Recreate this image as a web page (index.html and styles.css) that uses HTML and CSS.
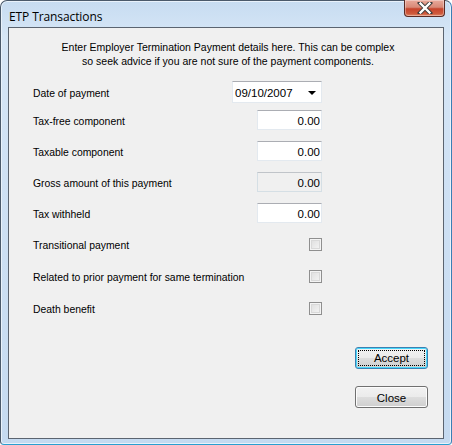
FILE: index.html
```html
<!DOCTYPE html>
<html lang="en">
<head>
    <meta charset="UTF-8">
    <title>ETP Transactions</title>
    <link rel="stylesheet" href="styles.css">
</head>
<body>
    <div class="window">
        <!-- Title bar -->
        <div class="title-bar">
            <span class="title">ETP Transactions</span>
            <div class="close-x">
                <svg width="18" height="12" viewBox="0 0 18 12">
                    <path d="M4 1 L14 11 M14 1 L4 11" stroke="#3a3a3a" stroke-width="4.2" stroke-linecap="square"/>
                    <path d="M4.5 1.5 L13.5 10.5 M13.5 1.5 L4.5 10.5" stroke="#ffffff" stroke-width="2.4" stroke-linecap="square"/>
                </svg>
            </div>
        </div>

        <!-- Client area -->
        <div class="client">
            <p class="intro">Enter Employer Termination Payment details here. This can be complex<br>so seek advice if you are not sure of the payment components.</p>

            <div class="form">
                <div class="row row-date">
                    <label>Date of payment</label>
                    <div class="date-box">
                        <span>09/10/2007</span>
                        <span class="arrow"></span>
                    </div>
                </div>
                <div class="row">
                    <label>Tax-free component</label>
                    <input class="num" type="text" value="0.00">
                </div>
                <div class="row">
                    <label>Taxable component</label>
                    <input class="num" type="text" value="0.00">
                </div>
                <div class="row">
                    <label>Gross amount of this payment</label>
                    <input class="num" type="text" value="0.00" disabled>
                </div>
                <div class="row">
                    <label>Tax withheld</label>
                    <input class="num" type="text" value="0.00">
                </div>
                <div class="row row-check">
                    <label>Transitional payment</label>
                    <span class="check"></span>
                </div>
                <div class="row row-check">
                    <label>Related to prior payment for same termination</label>
                    <span class="check"></span>
                </div>
                <div class="row row-check">
                    <label>Death benefit</label>
                    <span class="check"></span>
                </div>
            </div>

            <div class="buttons">
                <button class="btn btn-default"><span>Accept</span></button>
                <button class="btn">Close</button>
            </div>
        </div>
    </div>
</body>
</html>
```

FILE: styles.css
```css
/* Reset */
* {
    margin: 0;
    padding: 0;
    box-sizing: border-box;
}

body {
    width: 452px;
    height: 445px;
    overflow: hidden;
    background-color: #ffffff;
    font-family: 'Liberation Sans', Arial, sans-serif;
    font-size: 11px;
    color: #000;
}

/* Window frame */
.window {
    width: 452px;
    height: 445px;
    display: flex;
    flex-direction: column;
    border: 1px solid #4b5a6b;
    border-radius: 7px 7px 4px 4px;
    background: linear-gradient(180deg, #c7dcf1 0%, #d6e6f6 8%, #cfe1f4 40%, #c5daf0 100%);
    box-shadow: inset 0 0 0 1px #e9f2fb;
    padding: 0 7px 5px 7px;
    border-bottom-color: #2a9fd0;
    border-right-color: #3a7fb5;
}

.title-bar {
    height: 26px;
    display: flex;
    align-items: flex-start;
    justify-content: space-between;
}
.title {
    font-family: 'Open Sans', 'Liberation Sans', sans-serif;
    font-size: 12px;
    color: #000;
    padding-top: 7px;
    padding-left: 1px;
    letter-spacing: -0.1px;
}
.close-x {
    width: 41px;
    height: 17px;
    margin-right: -1px;
    margin-top: -1px;
    border: 1px solid #5a2a24;
    border-top: none;
    border-radius: 0 0 4px 4px;
    background: linear-gradient(180deg, #e9a99b 0%, #d88a78 45%, #c6442c 55%, #cf5a3c 85%, #e08a6a 100%);
    display: flex;
    align-items: center;
    justify-content: center;
    box-shadow: inset 0 0 0 1px rgba(255, 255, 255, 0.35);
}

/* Client area */
.client {
    flex: 1;
    background-color: #f0f0f0;
    border: 1px solid #5b6470;
    display: flex;
    flex-direction: column;
}

.intro {
    text-align: center;
    line-height: 14px;
    padding-top: 12px;
    padding-left: 4px;
    font-size: 10.5px;
}

.form {
    display: flex;
    flex-direction: column;
    gap: 11px;
    width: 313px;
    padding-left: 24px;
    margin-top: 13px;
}

.row {
    display: flex;
    align-items: center;
    justify-content: space-between;
    height: 20px;
}
.row-date {
    height: 22px;
    margin-bottom: -4px;
}
.row-check {
    height: 22px;
    margin-top: -1px;
}
.row label {
    padding-top: 2px;
    font-size: 10.4px;
}

.date-box {
    width: 90px;
    height: 22px;
    background-color: #fff;
    border: 1px solid #e3e9ef;
    border-top-color: #abadb3;
    display: flex;
    align-items: center;
    justify-content: space-between;
    padding: 1px 5px 0 2px;
    font-size: 11.5px;
}
.arrow {
    width: 0;
    height: 0;
    border-left: 4px solid transparent;
    border-right: 4px solid transparent;
    border-top: 4px solid #000;
}

.num {
    width: 65px;
    height: 20px;
    background-color: #fff;
    border: 1px solid #e3e9ef;
    border-top-color: #abadb3;
    text-align: right;
    padding: 1px 1px 0 0;
    font-family: 'Liberation Sans', Arial, sans-serif;
    font-size: 11.5px;
    color: #000;
    outline: none;
}
.num:disabled {
    background-color: #f0f0f0;
    border-color: #d5dfe5;
    border-top-color: #c0c4c9;
    color: #000;
}

.check {
    width: 13px;
    height: 13px;
    border: 1px solid #8f8f8f;
    background: linear-gradient(135deg, #dcdcdc 0%, #f4f4f4 90%);
    box-shadow: inset 0 0 0 1px #f4f4f4, inset 0 0 0 2px #d9d9d9;
}

/* Buttons */
.buttons {
    display: flex;
    flex-direction: column;
    align-items: flex-end;
    gap: 17px;
    padding-right: 15px;
    margin-top: 28px;
}
.btn {
    width: 73px;
    height: 22px;
    border: 1px solid #707070;
    border-radius: 3px;
    background: linear-gradient(180deg, #f2f2f2 0%, #ebebeb 50%, #dddddd 51%, #cfcfcf 100%);
    box-shadow: inset 0 0 0 1px #fcfcfc;
    font-family: 'Liberation Sans', Arial, sans-serif;
    font-size: 11.5px;
    color: #000;
    padding-top: 1px;
}
.btn-default {
    border-color: #3c7fb1;
    box-shadow: inset 0 0 0 1px #48d8fb;
    padding: 2px;
}
.btn-default span {
    display: block;
    height: 100%;
    border: 1px dotted #000;
    line-height: 15px;
}
```
